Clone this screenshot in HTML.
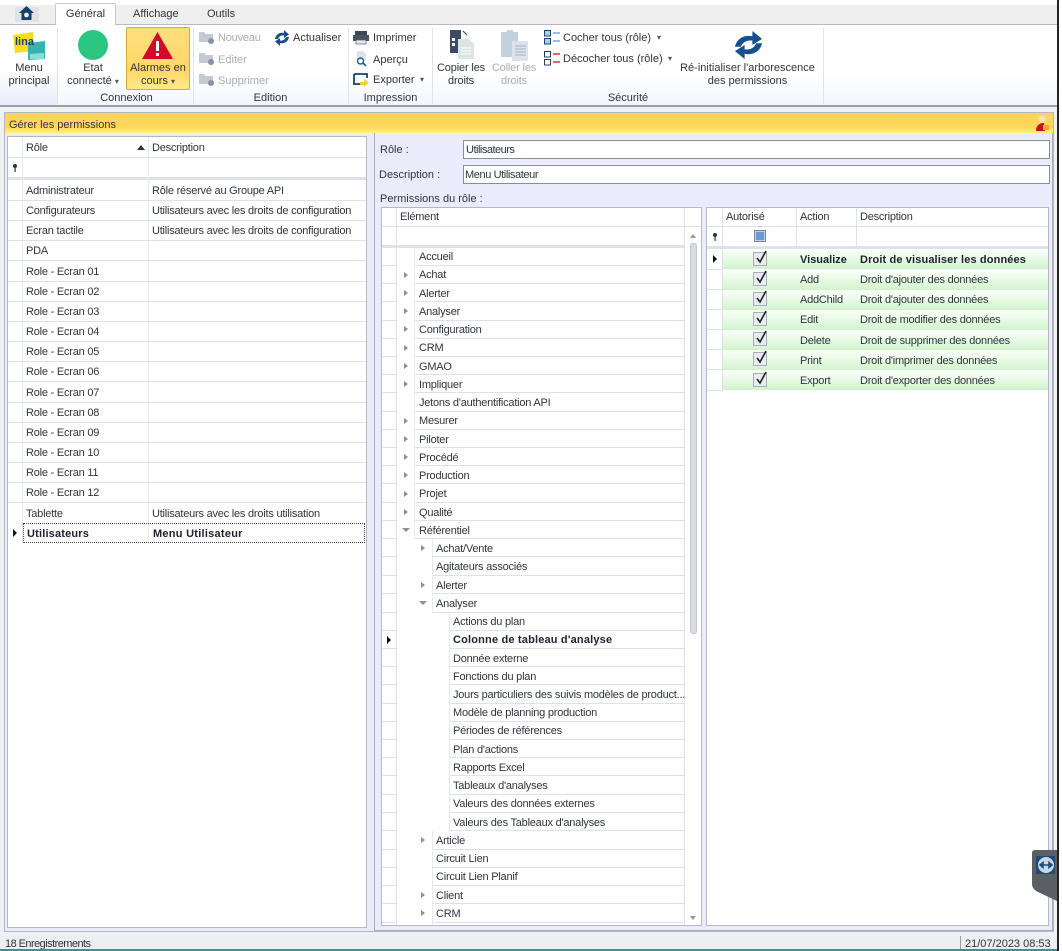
<!DOCTYPE html>
<html lang="fr"><head><meta charset="utf-8"><title>Gérer les permissions</title>
<style>
html,body{margin:0;padding:0}
body{width:1062px;height:951px;overflow:hidden;background:#fff;position:relative;font:11px/14px "Liberation Sans",sans-serif;color:#30343c;filter:blur(.3px)}
div,svg{position:absolute;box-sizing:border-box}
.t{white-space:nowrap;transform:translateY(1px)}
.c{text-align:center;white-space:nowrap;transform:translateY(1px)}
.car{font-size:8px;color:#555}
.g{color:#a9adb5}
.w{left:0;top:0;letter-spacing:-.22px}
.b{font-weight:bold;color:#1c2230;letter-spacing:.18px}
.box{background:#fff;border:1px solid #b4b8c2}
.hl{background:#dde1e8}
.vl{background:#e6e9ee;width:1px}
.m{background:#fff}
.arr{width:0;height:0;border-left:4px solid #8b8f96;border-top:3px solid transparent;border-bottom:3px solid transparent}
.cur{width:0;height:0;border-left:4px solid #111;border-top:4px solid transparent;border-bottom:4px solid transparent}
.sep{width:1px;top:28px;height:76px;background:#dfe3ea}
.grn{left:723px;width:325px;height:20px;background:linear-gradient(#fbfffb,#d8f6d4 85%,#cdf2c9)}
.ck{left:753px;width:14px;height:14px;background:#e9ebf0;border:1px solid #a9adb8}
</style></head><body>

<!-- top strip -->
<div style="left:0;top:5px;width:1057px;height:19px;background:#efefef"></div>
<div style="left:0;top:24px;width:1057px;height:1px;background:#b7bac0"></div>
<div style="left:15px;top:7px;width:24px;height:15px;background:#dfe1e3"></div>
<svg style="left:18px;top:5px" width="17" height="16" viewBox="0 0 17 16"><path d="M8.5 1 L16 8 H13.5 V15 H3.5 V8 H1 Z" fill="#14406e"/><circle cx="8.5" cy="10" r="2.4" fill="#e9eef3"/></svg>
<div style="left:55px;top:3px;width:61px;height:23px;background:#fff;border:1px solid #c6c9ce;border-bottom:0;border-radius:2px 2px 0 0"></div>
<div class="c" style="left:55px;top:6px;width:61px">Général</div>
<div class="t" style="left:133px;top:6px">Affichage</div>
<div class="t" style="left:207px;top:6px">Outils</div>

<!-- ribbon -->
<div style="left:0;top:25px;width:1057px;height:80px;background:linear-gradient(#fff,#fff 60%,#f3f6fb)"></div>
<div style="left:0;top:25px;width:57px;height:80px;background:linear-gradient(#fff,#fff 55%,#eaeafa)"></div>
<div class="sep" style="left:57px"></div><div class="sep" style="left:193px"></div><div class="sep" style="left:348px"></div><div class="sep" style="left:432px"></div><div class="sep" style="left:823px"></div>
<div style="left:0;top:105px;width:1057px;height:2px;background:#9aa0a8"></div>

<!-- Lina -->
<svg style="left:12px;top:29px" width="35" height="33" viewBox="0 0 35 33">
<path d="M1 6 L21 3 L22 22 L3 24 Z" fill="#f7dc1e"/>
<path d="M16 14 L33 12 L33 30 L16 31 Z" fill="#35b3b4"/>
<path d="M18 25 L32 24 L32 30 L18 30 Z" fill="#8fdcd8"/>
<text x="3" y="16" font-family="Liberation Sans,sans-serif" font-size="11" font-weight="bold" fill="#23406e">lina</text>
</svg>
<div class="c" style="left:0;top:61px;width:58px;line-height:13px">Menu<br>principal</div>

<!-- Connexion -->
<div style="left:78px;top:30px;width:30px;height:30px;border-radius:50%;background:#2bc682"></div>
<div class="c" style="left:60px;top:61px;width:66px;line-height:13px">Etat<br>connecté <span class="car">▾</span></div>
<div style="left:126px;top:27px;width:64px;height:63px;border:1px solid #d8a93a;border-radius:2px;background:linear-gradient(#ffdf7c,#ffd766 70%,#ffe98c)"></div>
<svg style="left:141px;top:31px" width="33" height="29" viewBox="0 0 33 29"><path d="M16.5 1 L32 28 H1 Z" fill="#d2092a"/><rect x="15" y="10" width="3" height="10" fill="#fff"/><rect x="15" y="22" width="3" height="3" fill="#fff"/></svg>
<div class="c" style="left:126px;top:61px;width:64px;line-height:13px">Alarmes en<br>cours <span class="car">▾</span></div>
<div class="c" style="left:60px;top:90px;width:133px">Connexion</div>

<!-- Edition -->
<svg style="left:199px;top:31px" width="16" height="14" viewBox="0 0 16 14"><path d="M0 1 H5 L7 3 H14 V11 H0 Z" fill="#c3cad6"/><circle cx="12" cy="10" r="3" fill="#8a93a2"/></svg>
<svg style="left:199px;top:52px" width="16" height="14" viewBox="0 0 16 14"><path d="M0 1 H5 L7 3 H14 V11 H0 Z" fill="#c3cad6"/><circle cx="12" cy="10" r="3" fill="#8a93a2"/></svg>
<svg style="left:199px;top:73px" width="16" height="14" viewBox="0 0 16 14"><path d="M0 1 H5 L7 3 H14 V11 H0 Z" fill="#c3cad6"/><circle cx="12" cy="10" r="3" fill="#8a93a2"/></svg>
<div class="t g" style="left:218px;top:30px;letter-spacing:-.2px">Nouveau</div>
<div class="t g" style="left:218px;top:52px">Editer</div>
<div class="t g" style="left:218px;top:73px">Supprimer</div>
<svg style="left:274px;top:30px" width="16" height="16" viewBox="0 0 16 16"><path d="M1 9 C2 4 6 2 10 3 L10 0 L15 4.5 L10 8 L10 5.5 C7 5 5 6.5 4 9 Z" fill="#17508f"/><path d="M15 7 C14 12 10 14 6 13 L6 16 L1 11.5 L6 8 L6 10.5 C9 11 11 9.5 12 7 Z" fill="#17508f"/></svg>
<div class="t" style="left:293px;top:30px">Actualiser</div>
<div class="c" style="left:193px;top:90px;width:155px">Edition</div>

<!-- Impression -->
<svg style="left:353px;top:31px" width="16" height="14" viewBox="0 0 16 14"><rect x="2" y="0" width="12" height="4" fill="#3d4653"/><rect x="0" y="4" width="16" height="6" fill="#4a5360"/><rect x="3" y="9" width="10" height="4" fill="#e6e8ec" stroke="#59606c" stroke-width=".7"/></svg>
<svg style="left:355px;top:51px" width="15" height="16" viewBox="0 0 15 16"><path d="M2 0 H8 L11 3 V9 H2 Z" fill="#dfe3e8"/><circle cx="5.5" cy="10" r="3" fill="none" stroke="#1f5c9e" stroke-width="1.4"/><path d="M8 12 L11 15" stroke="#1f5c9e" stroke-width="1.6"/></svg>
<svg style="left:353px;top:73px" width="16" height="14" viewBox="0 0 16 14"><path d="M1 1 H14 V5 M1 1 V11 H7" fill="none" stroke="#1c3f6f" stroke-width="1.8"/><path d="M7 9 L11 9 L11 6 L16 10 L11 14 L11 12 L7 12 Z" fill="#f2cc3f"/></svg>
<div class="t" style="left:373px;top:30px">Imprimer</div>
<div class="t" style="left:373px;top:52px">Aperçu</div>
<div class="t" style="left:373px;top:72px">Exporter</div>
<div class="t car" style="left:420px;top:72px">▾</div>
<div class="c" style="left:349px;top:90px;width:83px">Impression</div>

<!-- Sécurité -->
<svg style="left:449px;top:29px" width="26" height="30" viewBox="0 0 26 30"><path d="M1 1 H12 V24 H1 Z" fill="#3c4a66"/><path d="M3 9 H6 V12 H3 Z M3 14 H6 V17 H3 Z" fill="#fff"/><path d="M9 10 H20 L25 15 V30 H9 Z" fill="#dbe6e4"/><path d="M12 19 H22 M12 22 H22 M12 25 H22" stroke="#fff"/><path d="M14 2 L18 6" stroke="#3c4a66" stroke-width="1.2"/></svg>
<svg style="left:500px;top:29px" width="29" height="32" viewBox="0 0 29 32"><path d="M1 3 H7 V1 H13 V3 H18 V28 H1 Z" fill="#c3d0de"/><path d="M12 12 H28 V32 H12 Z" fill="#dce2ea"/><path d="M15 17 H26 M15 20 H26 M15 23 H26 M15 26 H26" stroke="#aab3c2"/></svg>
<div class="c" style="left:432px;top:61px;width:58px;line-height:13px;letter-spacing:-.15px">Copier les<br>droits</div>
<div class="c g" style="left:488px;top:61px;width:52px;line-height:13px;letter-spacing:-.15px">Coller les<br>droits</div>
<svg style="left:544px;top:30px" width="16" height="15" viewBox="0 0 16 15"><rect x=".5" y=".5" width="6" height="5.5" fill="#9fd6df" stroke="#1d3f6e"/><rect x=".5" y="8.5" width="6" height="5.5" fill="#9fd6df" stroke="#1d3f6e"/><path d="M9 3 H16 M9 11 H16" stroke="#7fa6d6" stroke-width="1.5"/></svg>
<svg style="left:544px;top:51px" width="16" height="15" viewBox="0 0 16 15"><rect x=".5" y=".5" width="6" height="5.5" fill="#fff" stroke="#1d3f6e"/><rect x=".5" y="8.5" width="6" height="5.5" fill="#fff" stroke="#1d3f6e"/><path d="M9 3 H16 M9 11 H16" stroke="#d42f4c" stroke-width="1.5"/></svg>
<div class="t" style="left:563px;top:30px">Cocher tous (rôle)</div>
<div class="t" style="left:563px;top:51px">Décocher tous (rôle)</div>
<div class="t car" style="left:657px;top:30px">▾</div>
<div class="t car" style="left:668px;top:51px">▾</div>
<svg style="left:733px;top:31px" width="31" height="28" viewBox="0 0 16 16" preserveAspectRatio="none"><path d="M1 9 C2 4 6 2 10 3 L10 0 L15 4.5 L10 8 L10 5.5 C7 5 5 6.5 4 9 Z" fill="#17508f"/><path d="M15 7 C14 12 10 14 6 13 L6 16 L1 11.5 L6 8 L6 10.5 C9 11 11 9.5 12 7 Z" fill="#17508f"/></svg>
<div class="c" style="left:670px;top:61px;width:155px;line-height:13px">Ré-initialiser l'arborescence<br>des permissions</div>
<div class="c" style="left:433px;top:90px;width:390px">Sécurité</div>

<!-- main -->
<div style="left:0;top:107px;width:1057px;height:829px;background:#f0f1f5"></div>
<div style="left:4px;top:112px;width:1050px;height:820px;background:#ebecfb;border:1px solid #b4b8c0"></div>
<div style="left:5px;top:113px;width:1048px;height:20px;background:linear-gradient(#fcd35f,#ffd75c 70%,#fff07a)"></div>
<div class="t" style="left:9px;top:117px">Gérer les permissions</div>
<svg style="left:1035px;top:115px" width="15" height="17" viewBox="0 0 15 17"><circle cx="7" cy="4" r="3.5" fill="#f7e4b0"/><path d="M1 16 C1 10 5 8 9 8 L10 16 Z" fill="#c4121a"/><rect x="8" y="10" width="6" height="5" fill="#eea83a"/></svg>

<!-- left grid -->
<div class="w">
<div class="box" style="left:7px;top:136px;width:360px;height:792px"></div>
<div class="hl" style="left:8px;top:157px;width:358px;height:1px"></div>
<div style="left:8px;top:177px;width:358px;height:3px;background:#dfe2e8"></div>
<div class="vl" style="left:22px;top:137px;height:406px"></div>
<div class="vl" style="left:148px;top:137px;height:406px"></div>
<div class="t" style="left:26px;top:140px">Rôle</div>
<div class="t" style="left:152px;top:140px">Description</div>
<svg style="left:137px;top:145px" width="8" height="5" viewBox="0 0 8 5"><path d="M0 5 L4 0 L8 5 Z" fill="#333"/></svg>
<svg style="left:12px;top:164px" width="6" height="8" viewBox="0 0 6 8"><circle cx="3" cy="2" r="2" fill="#333"/><rect x="2.5" y="3" width="1.2" height="5" fill="#333"/></svg>

<div class="hl" style="left:8px;top:200px;width:358px;height:1px"></div><div class="hl" style="left:8px;top:220px;width:358px;height:1px"></div><div class="hl" style="left:8px;top:240px;width:358px;height:1px"></div><div class="hl" style="left:8px;top:260px;width:358px;height:1px"></div><div class="hl" style="left:8px;top:281px;width:358px;height:1px"></div><div class="hl" style="left:8px;top:301px;width:358px;height:1px"></div><div class="hl" style="left:8px;top:321px;width:358px;height:1px"></div><div class="hl" style="left:8px;top:341px;width:358px;height:1px"></div><div class="hl" style="left:8px;top:361px;width:358px;height:1px"></div><div class="hl" style="left:8px;top:381px;width:358px;height:1px"></div><div class="hl" style="left:8px;top:402px;width:358px;height:1px"></div><div class="hl" style="left:8px;top:422px;width:358px;height:1px"></div><div class="hl" style="left:8px;top:442px;width:358px;height:1px"></div><div class="hl" style="left:8px;top:462px;width:358px;height:1px"></div><div class="hl" style="left:8px;top:482px;width:358px;height:1px"></div><div class="hl" style="left:8px;top:502px;width:358px;height:1px"></div>

<div class="t" style="left:26px;top:183px">Administrateur</div><div class="t" style="left:152px;top:183px">Rôle réservé au Groupe API</div>
<div class="t" style="left:26px;top:203px">Configurateurs</div><div class="t" style="left:152px;top:203px">Utilisateurs avec les droits de configuration</div>
<div class="t" style="left:26px;top:223px">Ecran tactile</div><div class="t" style="left:152px;top:223px">Utilisateurs avec les droits de configuration</div>
<div class="t" style="left:26px;top:243px">PDA</div>
<div class="t" style="left:26px;top:264px">Role - Ecran 01</div>
<div class="t" style="left:26px;top:284px">Role - Ecran 02</div>
<div class="t" style="left:26px;top:304px">Role - Ecran 03</div>
<div class="t" style="left:26px;top:324px">Role - Ecran 04</div>
<div class="t" style="left:26px;top:344px">Role - Ecran 05</div>
<div class="t" style="left:26px;top:364px">Role - Ecran 06</div>
<div class="t" style="left:26px;top:385px">Role - Ecran 07</div>
<div class="t" style="left:26px;top:405px">Role - Ecran 08</div>
<div class="t" style="left:26px;top:425px">Role - Ecran 09</div>
<div class="t" style="left:26px;top:445px">Role - Ecran 10</div>
<div class="t" style="left:26px;top:465px">Role - Ecran 11</div>
<div class="t" style="left:26px;top:485px">Role - Ecran 12</div>
<div class="t" style="left:26px;top:506px">Tablette</div><div class="t" style="left:152px;top:506px">Utilisateurs avec les droits utilisation</div>
<div style="left:23px;top:523px;width:342px;height:20px;border:1px dotted #444"></div>
<div class="t b" style="left:27px;top:526px">Utilisateurs</div><div class="t b" style="left:153px;top:526px;letter-spacing:.26px">Menu Utilisateur</div>
<div class="cur" style="left:13px;top:529px"></div>
</div>

<!-- right side -->
<div style="left:374px;top:133px;width:679px;height:798px;border:1px solid #a9adb5;border-top:0;background:#ebecfb"></div>
<div class="t" style="left:380px;top:142px">Rôle :</div>
<div class="t" style="left:379px;top:167px">Description :</div>
<div class="t" style="left:380px;top:191px">Permissions du rôle :</div>
<div class="box" style="left:463px;top:140px;width:587px;height:19px;border-color:#8a8d94"></div>
<div class="box" style="left:463px;top:165px;width:587px;height:19px;border-color:#8a8d94"></div>
<div class="t" style="left:466px;top:142px;letter-spacing:-.5px">Utilisateurs</div>
<div class="t" style="left:465px;top:167px;letter-spacing:-.4px">Menu Utilisateur</div>

<!-- tree grid -->
<div class="w">
<div class="box" style="left:381px;top:207px;width:321px;height:719px"></div>
<div class="hl" style="left:382px;top:226px;width:303px;height:1px"></div>
<div class="hl" style="left:685px;top:226px;width:16px;height:1px"></div>
<div class="t" style="left:400px;top:209px">Elément</div>
<div style="left:690px;top:243px;width:7px;height:391px;background:#d8dade;border:1px solid #c3c6cc;border-radius:3px"></div>
<div style="left:690px;top:234px;width:0;height:0;border-left:3px solid transparent;border-right:3px solid transparent;border-bottom:4px solid #999"></div>
<div style="left:690px;top:916px;width:0;height:0;border-left:3px solid transparent;border-right:3px solid transparent;border-top:4px solid #999"></div>

<div class="hl" style="left:382px;top:265px;width:303px;height:1px"></div><div class="hl" style="left:382px;top:283px;width:303px;height:1px"></div><div class="hl" style="left:382px;top:301px;width:303px;height:1px"></div><div class="hl" style="left:382px;top:320px;width:303px;height:1px"></div><div class="hl" style="left:382px;top:338px;width:303px;height:1px"></div><div class="hl" style="left:382px;top:356px;width:303px;height:1px"></div><div class="hl" style="left:382px;top:374px;width:303px;height:1px"></div><div class="hl" style="left:382px;top:392px;width:303px;height:1px"></div><div class="hl" style="left:382px;top:411px;width:303px;height:1px"></div><div class="hl" style="left:382px;top:429px;width:303px;height:1px"></div><div class="hl" style="left:382px;top:447px;width:303px;height:1px"></div><div class="hl" style="left:382px;top:465px;width:303px;height:1px"></div><div class="hl" style="left:382px;top:483px;width:303px;height:1px"></div><div class="hl" style="left:382px;top:502px;width:303px;height:1px"></div><div class="hl" style="left:382px;top:520px;width:303px;height:1px"></div><div class="hl" style="left:382px;top:538px;width:303px;height:1px"></div><div class="hl" style="left:382px;top:556px;width:303px;height:1px"></div><div class="hl" style="left:382px;top:575px;width:303px;height:1px"></div><div class="hl" style="left:382px;top:593px;width:303px;height:1px"></div><div class="hl" style="left:382px;top:612px;width:303px;height:1px"></div><div class="hl" style="left:382px;top:630px;width:303px;height:1px"></div><div class="hl" style="left:382px;top:648px;width:303px;height:1px"></div><div class="hl" style="left:382px;top:666px;width:303px;height:1px"></div><div class="hl" style="left:382px;top:684px;width:303px;height:1px"></div><div class="hl" style="left:382px;top:703px;width:303px;height:1px"></div><div class="hl" style="left:382px;top:721px;width:303px;height:1px"></div><div class="hl" style="left:382px;top:739px;width:303px;height:1px"></div><div class="hl" style="left:382px;top:757px;width:303px;height:1px"></div><div class="hl" style="left:382px;top:775px;width:303px;height:1px"></div><div class="hl" style="left:382px;top:794px;width:303px;height:1px"></div><div class="hl" style="left:382px;top:812px;width:303px;height:1px"></div><div class="hl" style="left:382px;top:830px;width:303px;height:1px"></div><div class="hl" style="left:382px;top:849px;width:303px;height:1px"></div><div class="hl" style="left:382px;top:867px;width:303px;height:1px"></div><div class="hl" style="left:382px;top:885px;width:303px;height:1px"></div><div class="hl" style="left:382px;top:903px;width:303px;height:1px"></div><div class="hl" style="left:382px;top:922px;width:303px;height:1px"></div>

<!-- indent masks: horizontal rules skip the tree indent -->
<div class="m" style="left:397px;top:248px;width:17px;height:291px"></div>
<div class="m" style="left:397px;top:539px;width:35px;height:74px"></div>
<div class="m" style="left:397px;top:613px;width:52px;height:218px"></div>
<div class="m" style="left:397px;top:831px;width:35px;height:94px"></div>

<div style="left:382px;top:245px;width:303px;height:3px;background:#dfe2e8"></div>
<div class="vl" style="left:396px;top:208px;height:717px;background:#dde1e8"></div>
<div class="vl" style="left:684px;top:208px;height:717px;background:#dde1e8"></div>
<div class="vl" style="left:414px;top:248px;height:291px"></div>
<div class="vl" style="left:432px;top:539px;height:74px"></div>
<div class="vl" style="left:449px;top:613px;height:218px"></div>
<div class="vl" style="left:432px;top:831px;height:94px"></div>

<div class="t" style="left:419px;top:249px">Accueil</div>
<div class="t" style="left:419px;top:267px">Achat</div><div class="arr" style="left:404px;top:272px"></div>
<div class="t" style="left:419px;top:286px">Alerter</div><div class="arr" style="left:404px;top:290px"></div>
<div class="t" style="left:419px;top:304px">Analyser</div><div class="arr" style="left:404px;top:308px"></div>
<div class="t" style="left:419px;top:322px">Configuration</div><div class="arr" style="left:404px;top:326px"></div>
<div class="t" style="left:419px;top:340px">CRM</div><div class="arr" style="left:404px;top:345px"></div>
<div class="t" style="left:419px;top:359px">GMAO</div><div class="arr" style="left:404px;top:363px"></div>
<div class="t" style="left:419px;top:377px">Impliquer</div><div class="arr" style="left:404px;top:381px"></div>
<div class="t" style="left:419px;top:395px">Jetons d'authentification API</div>
<div class="t" style="left:419px;top:413px">Mesurer</div><div class="arr" style="left:404px;top:418px"></div>
<div class="t" style="left:419px;top:432px">Piloter</div><div class="arr" style="left:404px;top:436px"></div>
<div class="t" style="left:419px;top:450px">Procédé</div><div class="arr" style="left:404px;top:454px"></div>
<div class="t" style="left:419px;top:468px">Production</div><div class="arr" style="left:404px;top:472px"></div>
<div class="t" style="left:419px;top:486px">Projet</div><div class="arr" style="left:404px;top:491px"></div>
<div class="t" style="left:419px;top:505px">Qualité</div><div class="arr" style="left:404px;top:509px"></div>
<div class="t" style="left:419px;top:523px">Référentiel</div>
<div style="left:402px;top:528px;width:0;height:0;border-left:4px solid transparent;border-right:4px solid transparent;border-top:4px solid #8b8f96"></div>
<div class="t" style="left:436px;top:541px">Achat/Vente</div><div class="arr" style="left:421px;top:545px"></div>
<div class="t" style="left:436px;top:559px">Agitateurs associés</div>
<div class="t" style="left:436px;top:578px">Alerter</div><div class="arr" style="left:421px;top:582px"></div>
<div class="t" style="left:436px;top:596px">Analyser</div>
<div style="left:419px;top:601px;width:0;height:0;border-left:4px solid transparent;border-right:4px solid transparent;border-top:4px solid #8b8f96"></div>
<div class="t" style="left:453px;top:614px">Actions du plan</div>
<div class="t b" style="left:453px;top:632px">Colonne de tableau d'analyse</div><div class="cur" style="left:387px;top:636px"></div>
<div class="t" style="left:453px;top:651px">Donnée externe</div>
<div class="t" style="left:453px;top:669px">Fonctions du plan</div>
<div class="t" style="left:453px;top:687px">Jours particuliers des suivis modèles de product...</div>
<div class="t" style="left:453px;top:705px">Modèle de planning production</div>
<div class="t" style="left:453px;top:723px">Périodes de références</div>
<div class="t" style="left:453px;top:742px">Plan d'actions</div>
<div class="t" style="left:453px;top:760px">Rapports Excel</div>
<div class="t" style="left:453px;top:778px">Tableaux d'analyses</div>
<div class="t" style="left:453px;top:796px">Valeurs des données externes</div>
<div class="t" style="left:453px;top:815px">Valeurs des Tableaux d'analyses</div>
<div class="t" style="left:436px;top:833px">Article</div><div class="arr" style="left:421px;top:837px"></div>
<div class="t" style="left:436px;top:851px">Circuit Lien</div>
<div class="t" style="left:436px;top:869px">Circuit Lien Planif</div>
<div class="t" style="left:436px;top:888px">Client</div><div class="arr" style="left:421px;top:892px"></div>
<div class="t" style="left:436px;top:906px">CRM</div><div class="arr" style="left:421px;top:910px"></div>
</div>

<!-- actions grid -->
<div class="w">
<div class="box" style="left:706px;top:207px;width:343px;height:719px"></div>
<div class="hl" style="left:707px;top:226px;width:341px;height:1px"></div>
<div style="left:707px;top:246px;width:341px;height:3px;background:#dfe2e8"></div>
<div class="vl" style="left:722px;top:208px;height:183px;background:#dde1e8"></div>
<div class="vl" style="left:796px;top:208px;height:41px;background:#dde1e8"></div>
<div class="vl" style="left:856px;top:208px;height:41px;background:#dde1e8"></div>
<div class="t" style="left:726px;top:209px">Autorisé</div>
<div class="t" style="left:800px;top:209px">Action</div>
<div class="t" style="left:860px;top:209px">Description</div>
<svg style="left:712px;top:233px" width="6" height="8" viewBox="0 0 6 8"><circle cx="3" cy="2" r="2" fill="#333"/><rect x="2.5" y="3" width="1.2" height="5" fill="#333"/></svg>
<div style="left:754px;top:230px;width:12px;height:12px;background:#bcd0ec;border:1px solid #7f8a9c"></div>
<div style="left:756px;top:232px;width:8px;height:8px;background:#6d97d6"></div>

<div class="grn" style="top:249px"></div><div class="grn" style="top:270px"></div><div class="grn" style="top:290px"></div><div class="grn" style="top:310px"></div><div class="grn" style="top:330px"></div><div class="grn" style="top:350px"></div><div class="grn" style="top:370px"></div>
<div class="hl" style="left:707px;top:269px;width:16px;height:1px"></div><div class="hl" style="left:707px;top:289px;width:16px;height:1px"></div><div class="hl" style="left:707px;top:309px;width:16px;height:1px"></div><div class="hl" style="left:707px;top:329px;width:16px;height:1px"></div><div class="hl" style="left:707px;top:349px;width:16px;height:1px"></div><div class="hl" style="left:707px;top:369px;width:16px;height:1px"></div><div class="hl" style="left:707px;top:390px;width:16px;height:1px"></div>
<div class="cur" style="left:713px;top:255px"></div>

<div class="ck" style="top:252px"></div><svg style="left:755px;top:250px" width="13" height="15" viewBox="0 0 13 15"><path d="M2 8 L5 12 L11 1" fill="none" stroke="#222" stroke-width="1.6"/></svg>
<div class="ck" style="top:272px"></div><svg style="left:755px;top:270px" width="13" height="15" viewBox="0 0 13 15"><path d="M2 8 L5 12 L11 1" fill="none" stroke="#222" stroke-width="1.6"/></svg>
<div class="ck" style="top:292px"></div><svg style="left:755px;top:290px" width="13" height="15" viewBox="0 0 13 15"><path d="M2 8 L5 12 L11 1" fill="none" stroke="#222" stroke-width="1.6"/></svg>
<div class="ck" style="top:312px"></div><svg style="left:755px;top:310px" width="13" height="15" viewBox="0 0 13 15"><path d="M2 8 L5 12 L11 1" fill="none" stroke="#222" stroke-width="1.6"/></svg>
<div class="ck" style="top:332px"></div><svg style="left:755px;top:330px" width="13" height="15" viewBox="0 0 13 15"><path d="M2 8 L5 12 L11 1" fill="none" stroke="#222" stroke-width="1.6"/></svg>
<div class="ck" style="top:352px"></div><svg style="left:755px;top:350px" width="13" height="15" viewBox="0 0 13 15"><path d="M2 8 L5 12 L11 1" fill="none" stroke="#222" stroke-width="1.6"/></svg>
<div class="ck" style="top:373px"></div><svg style="left:755px;top:371px" width="13" height="15" viewBox="0 0 13 15"><path d="M2 8 L5 12 L11 1" fill="none" stroke="#222" stroke-width="1.6"/></svg>

<div class="t b" style="left:800px;top:252px;letter-spacing:0">Visualize</div><div class="t b" style="left:860px;top:252px;letter-spacing:.13px">Droit de visualiser les données</div>
<div class="t" style="left:800px;top:272px">Add</div><div class="t" style="left:860px;top:272px">Droit d'ajouter des données</div>
<div class="t" style="left:800px;top:292px">AddChild</div><div class="t" style="left:860px;top:292px">Droit d'ajouter des données</div>
<div class="t" style="left:800px;top:312px">Edit</div><div class="t" style="left:860px;top:312px">Droit de modifier des données</div>
<div class="t" style="left:800px;top:333px">Delete</div><div class="t" style="left:860px;top:333px">Droit de supprimer des données</div>
<div class="t" style="left:800px;top:353px">Print</div><div class="t" style="left:860px;top:353px">Droit d'imprimer des données</div>
<div class="t" style="left:800px;top:373px">Export</div><div class="t" style="left:860px;top:373px">Droit d'exporter des données</div>
</div>

<!-- teamviewer tab -->
<svg style="left:1032px;top:850px" width="25" height="52" viewBox="0 0 25 52"><path d="M3 0 H25 V51 L6 42 Q0 39 0 34 V3 Q0 0 3 0 Z" fill="#5b5e63"/><rect x="4" y="6" width="19" height="18" fill="#1c4c7c"/><circle cx="14" cy="15" r="8" fill="#c9d6e2"/><path d="M8 15 H20 M8 15 L11 12.5 V17.5 Z M20 15 L17 12.5 V17.5 Z" stroke="#1c4c7c" stroke-width="1.5" fill="#1c4c7c"/></svg>

<!-- status -->
<div style="left:0;top:936px;width:1057px;height:13px;background:#eceef2"></div>
<div class="t" style="left:5px;top:936px;letter-spacing:-.55px">18 Enregistrements</div>
<div style="left:960px;top:936px;width:1px;height:13px;background:#9aa0a8"></div>
<div class="t" style="left:965px;top:936px">21/07/2023 08:53</div>
<div style="left:0;top:949px;width:1057px;height:2px;background:#4d8a8f"></div>
<div style="left:1057px;top:0;width:2px;height:951px;background:#222"></div>
</body></html>
